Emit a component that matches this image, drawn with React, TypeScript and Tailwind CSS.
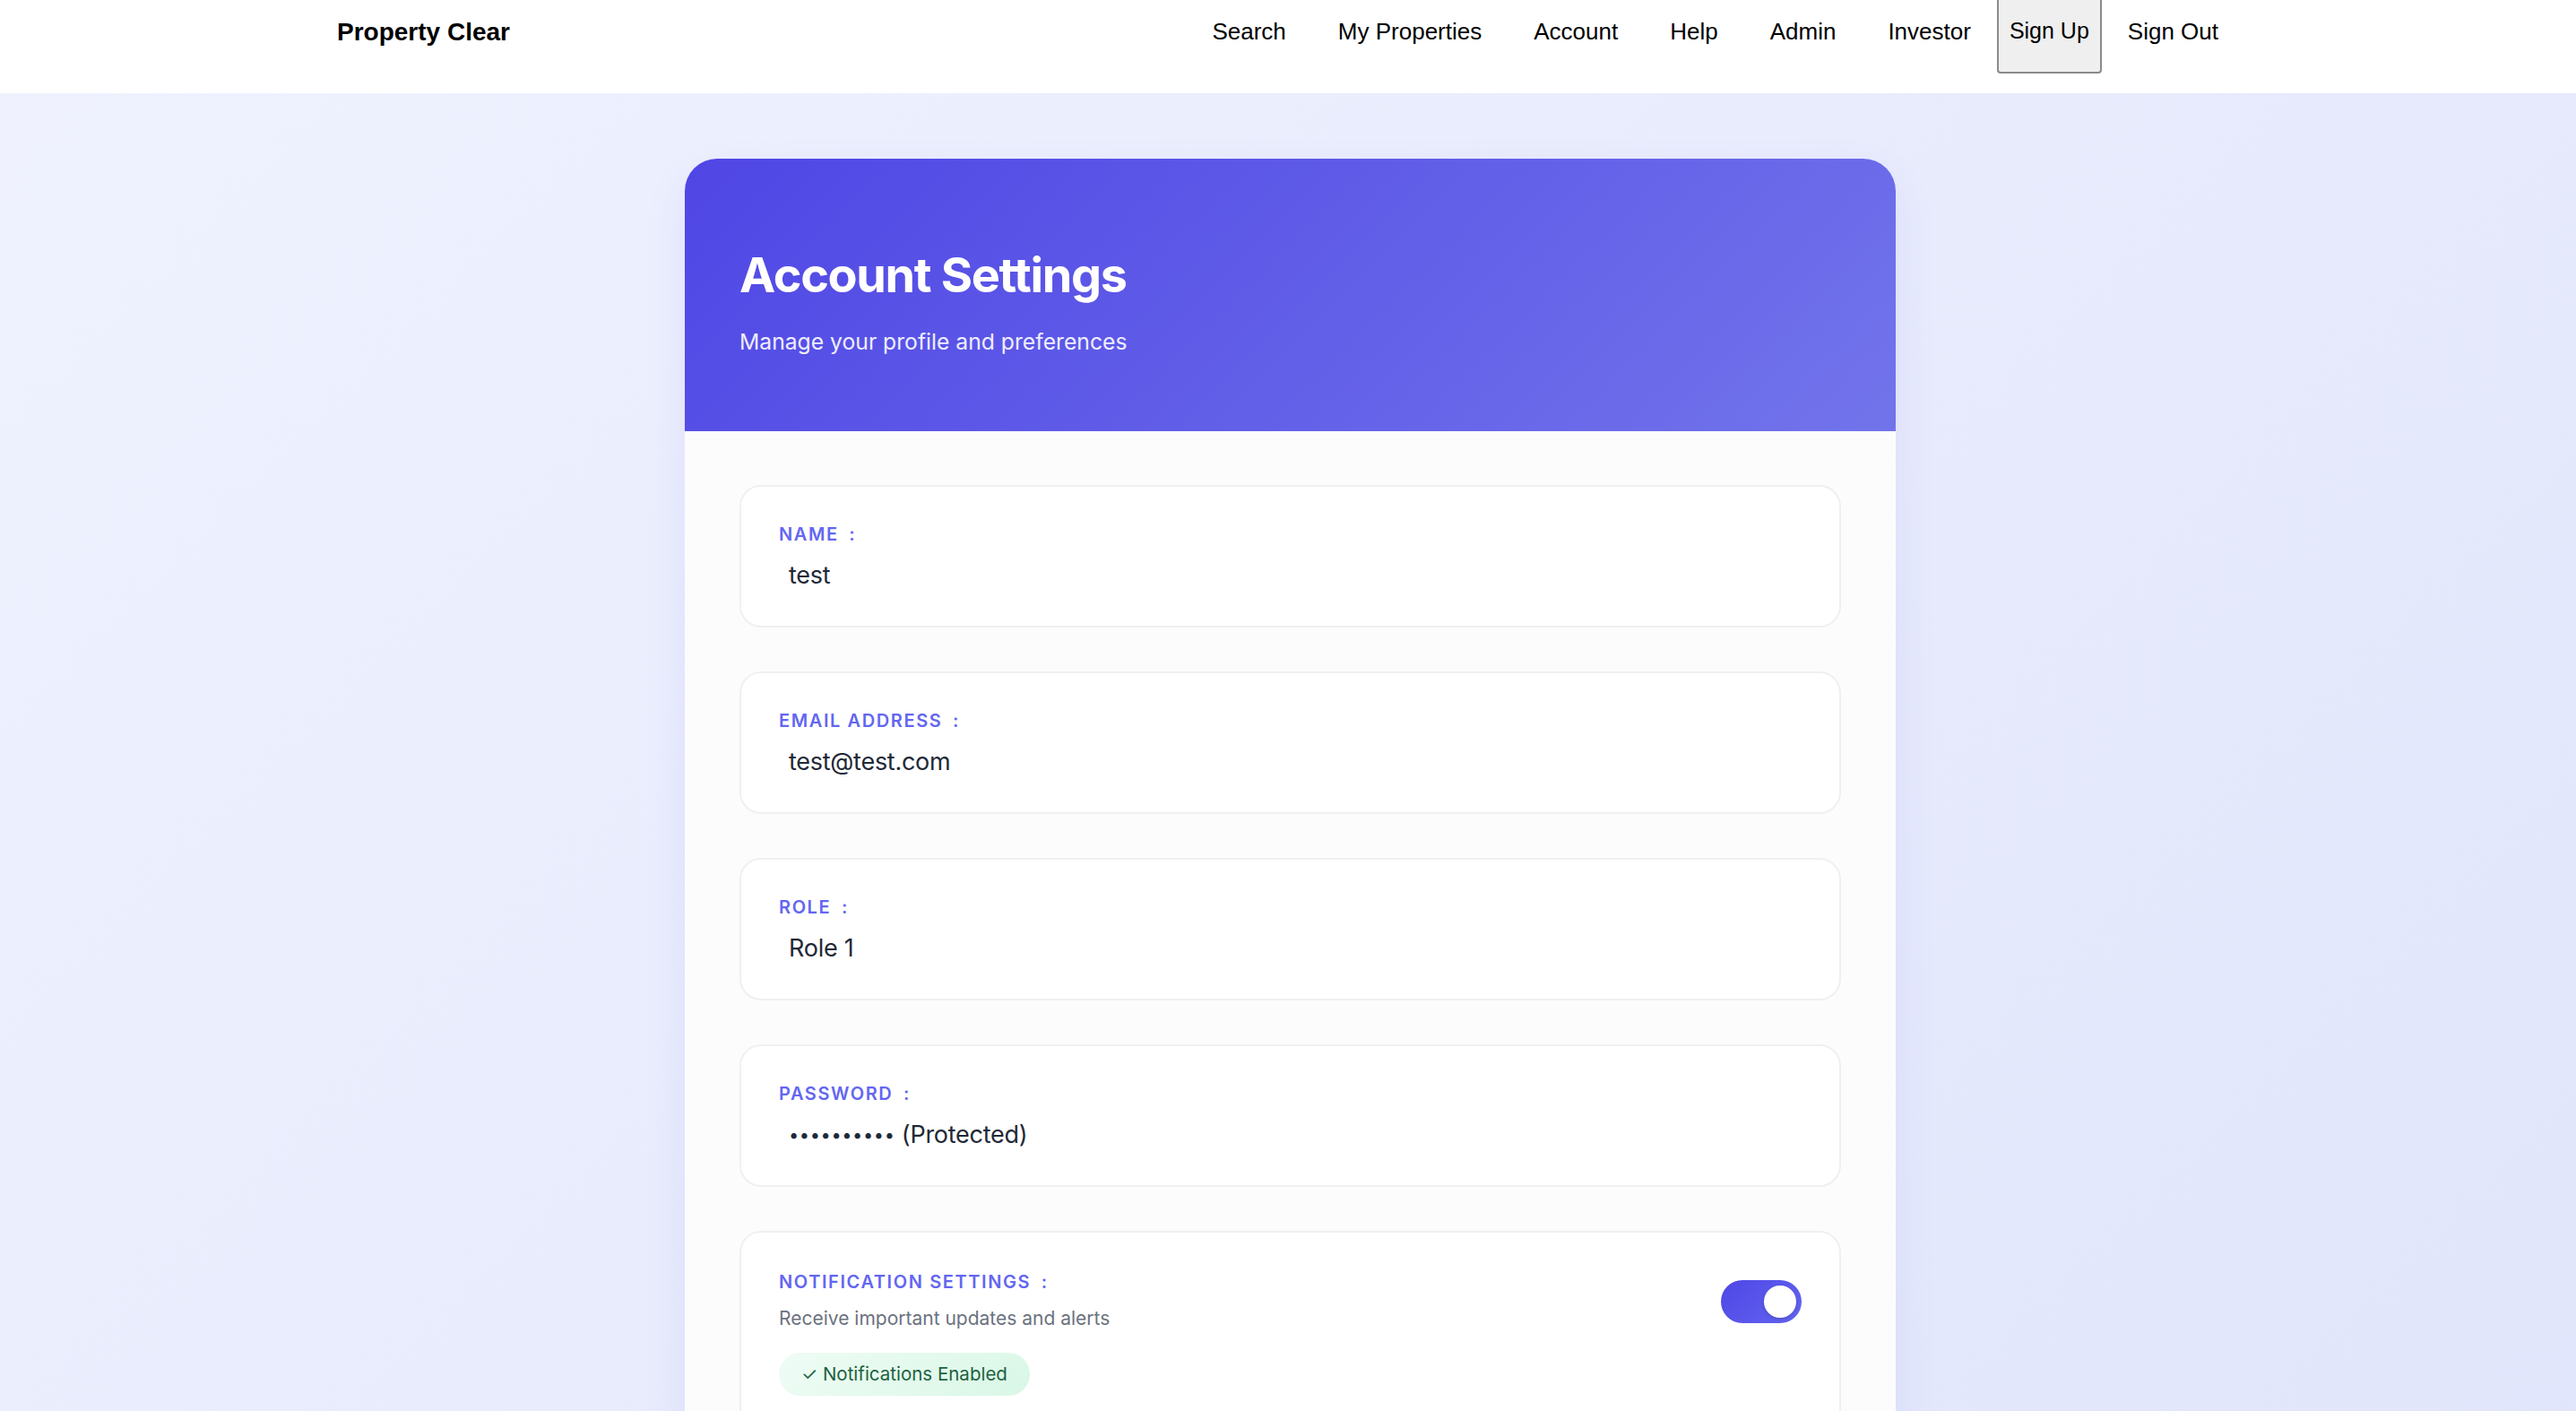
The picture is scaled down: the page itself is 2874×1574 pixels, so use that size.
import { useState } from 'react';

const links = ['Search', 'My Properties', 'Account', 'Help', 'Admin', 'Investor'];

const fields = [
  { label: 'NAME', value: 'test' },
  { label: 'EMAIL ADDRESS', value: 'test@test.com' },
  { label: 'ROLE', value: 'Role 1' },
];

const Label = ({ children }: { children: string }) => (
  <div className="text-[20px] leading-[28px] font-semibold tracking-[0.08em] text-[#6366f1]">
    {children} <span className="ml-[5px]">:</span>
  </div>
);

const Field = ({ label, children }: { label: string; children: React.ReactNode }) => (
  <div className="h-[159px] rounded-[24px] border-2 border-[#f0f0f2] bg-white pl-[42px] pr-[42px] pt-[39px]">
    <Label>{label}</Label>
    <div className="mt-[12px] pl-[11px] text-[27px] leading-[40px] tracking-[-0.01em] text-[#1f2937]">{children}</div>
  </div>
);

const App = () => {
  const [notify, setNotify] = useState(true);

  return (
    <div className="min-h-screen bg-[linear-gradient(135deg,#eff2fe_0%,#e1e5fb_100%)] font-['Inter',sans-serif]">
      {/* Top bar */}
      <nav className="flex h-[104px] items-start bg-white pl-[376px] pr-[370px] font-['Liberation_Sans',Arial,sans-serif] text-black">
        <div className="pt-[18px] text-[28px] leading-[36px] font-bold">Property Clear</div>
        <div className="ml-auto flex items-start">
          {links.map((l) => (
            <a key={l} href="#" className="px-[29px] pt-[17px] text-[26px] leading-[36px]">
              {l}
            </a>
          ))}
          <button className="-mt-[4px] flex h-[86px] items-start rounded-[4px] border-2 border-[#8a8a8a] bg-[#efefef] px-[12px] pt-[18px] text-[25px] leading-[36px]">
            Sign Up
          </button>
          <a href="#" className="px-[29px] pt-[17px] text-[26px] leading-[36px]">
            Sign Out
          </a>
        </div>
      </nav>

      <main className="pl-[5px] pt-[73px] pb-[80px]">
        <div className="mx-auto w-[1351px] overflow-hidden rounded-[36px] bg-[#fcfcfd] shadow-[0_20px_50px_rgba(79,70,229,0.08)]">
          {/* Header */}
          <div className="h-[304px] bg-[linear-gradient(135deg,#4f46e5_0%,#7274eb_100%)] px-[61px] pt-[97px] text-white">
            <h1 className="text-[54px] leading-[66px] font-bold tracking-[-0.025em]">Account Settings</h1>
            <p className="mt-[22px] text-[24.7px] leading-[39px] text-white/90">Manage your profile and preferences</p>
          </div>

          {/* Fields */}
          <div className="flex flex-col gap-[49px] px-[61px] pt-[60px] pb-[61px]">
            {fields.map((f) => (
              <Field key={f.label} label={f.label}>
                {f.value}
              </Field>
            ))}
            <Field label="PASSWORD">
              <span className="align-[2px] text-[20px] tracking-[0.6px]">••••••••••</span> (Protected)
            </Field>

            <div className="rounded-[24px] border-2 border-[#f0f0f2] bg-white pl-[42px] pr-[42px] pt-[41px] pb-[44px]">
              <div className="flex items-center justify-between">
                <div>
                  <Label>NOTIFICATION SETTINGS</Label>
                  <div className="mt-[11px] text-[21px] leading-[32px] text-[#6b7280]">
                    Receive important updates and alerts
                  </div>
                </div>
                <button
                  onClick={() => setNotify(!notify)}
                  className={`relative flex h-[48px] w-[90px] items-center rounded-full p-[6px] ${
                    notify
                      ? 'justify-end bg-[linear-gradient(135deg,#4f46e5,#6366f1)]'
                      : 'justify-start bg-[#d1d5db]'
                  }`}
                >
                  <span className="h-[36px] w-[36px] rounded-full bg-white shadow-[0_2px_4px_rgba(0,0,0,0.15)]" />
                </button>
              </div>
              {notify && (
                <div className="mt-[22px] inline-flex h-[48px] items-center rounded-full bg-[linear-gradient(135deg,#effcf5,#d9f7e6)] px-[25px] text-[20.5px] text-[#1f6140]">
                  ✓ Notifications Enabled
                </div>
              )}
            </div>
          </div>
        </div>
      </main>
    </div>
  );
};

export default App;
